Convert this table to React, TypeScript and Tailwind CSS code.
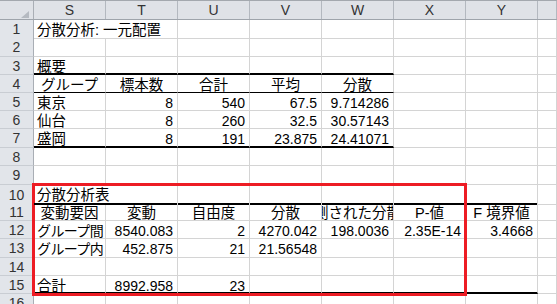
type Align = "l" | "r" | "c";
type Cell = [string, Align, ("spill" | "tight")?] | null;
type Row = { h: string; edge?: "thick" | "thin"; span?: number; cells: Cell[] };

const COLS = ["S", "T", "U", "V", "W", "X", "Y", ""];

// row heights follow the screenshot's gridlines (18/19px alternate)
const ROWS: Row[] = [
  { h: "h-[18px]", cells: [["分散分析: 一元配置", "l", "spill"]] },
  { h: "h-[19px]", cells: [] },
  { h: "h-[18px]", edge: "thick", span: 5, cells: [["概要", "l"]] },
  {
    h: "h-[18px]",
    edge: "thin",
    span: 5,
    cells: [["グループ", "c"], ["標本数", "c"], ["合計", "c"], ["平均", "c"], ["分散", "c"]],
  },
  { h: "h-[18px]", cells: [["東京", "l"], ["8", "r"], ["540", "r"], ["67.5", "r"], ["9.714286", "r"]] },
  { h: "h-[18px]", cells: [["仙台", "l"], ["8", "r"], ["260", "r"], ["32.5", "r"], ["30.57143", "r"]] },
  {
    h: "h-[19px]",
    edge: "thick",
    span: 5,
    cells: [["盛岡", "l"], ["8", "r"], ["191", "r"], ["23.875", "r"], ["24.41071", "r"]],
  },
  { h: "h-[18px]", cells: [] },
  { h: "h-[19px]", cells: [] },
  { h: "h-[18px]", edge: "thick", span: 7, cells: [["分散分析表", "l", "spill"]] },
  {
    h: "h-[18px]",
    cells: [
      ["変動要因", "c"],
      ["変動", "c"],
      ["自由度", "c"],
      ["分散", "c"],
      ["観測された分散比", "c"],
      ["P-値", "c"],
      ["F 境界値", "c"],
    ],
  },
  {
    h: "h-[18px]",
    cells: [
      ["グループ間", "l", "tight"],
      ["8540.083", "r"],
      ["2", "r"],
      ["4270.042", "r"],
      ["198.0036", "r"],
      ["2.35E-14", "r"],
      ["3.4668", "r"],
    ],
  },
  {
    h: "h-[19px]",
    cells: [["グループ内", "l", "tight"], ["452.875", "r"], ["21", "r"], ["21.56548", "r"]],
  },
  { h: "h-[18px]", cells: [] },
  { h: "h-[18px]", edge: "thick", span: 7, cells: [["合計", "l"], ["8992.958", "r"], ["23", "r"]] },
  { h: "h-[18px]", cells: [] },
];

const ALIGN: Record<Align, string> = {
  l: "justify-start pl-[3px]",
  r: "justify-end pr-[4px]",
  c: "justify-center",
};

function GridCell({ cell, edge }: { cell: Cell; edge?: "thick" | "thin" }) {
  const bottom =
    edge === "thick"
      ? "border-b-2 border-b-black"
      : edge === "thin"
        ? "border-b border-b-black"
        : "border-b border-b-[#d4d4d4]";
  // text spilling into an empty neighbour hides the gridline, like Excel
  const spill = cell?.[2] === "spill";
  const numeric = cell ? /^[\d.E-]+$/.test(cell[0]) : false;
  const size =
    cell?.[2] === "tight" ? "text-[14px] tracking-[-0.6px]" : numeric ? "text-[14px]" : "text-[14.5px]";
  return (
    <div
      className={`flex items-start whitespace-nowrap pt-[2px] leading-[16px] ${bottom} ${
        spill ? "relative z-10 overflow-visible" : "overflow-hidden border-r border-r-[#d4d4d4]"
      } ${cell ? ALIGN[cell[1]] : ""} ${size}`}
    >
      {cell && <span className="shrink-0">{cell[0]}</span>}
    </div>
  );
}

export default function App() {
  return (
    <div className="relative h-[304px] w-[557px] overflow-hidden bg-white font-['Liberation_Sans','Noto_Sans_CJK_JP',sans-serif] text-[14px] text-black">
      {/* column headers */}
      <div className="grid h-[20px] grid-cols-[34px_repeat(7,72px)_1fr] border-y border-t-[#a3a8ae] border-b-[#9ea4ab] bg-[#dfe2e7] text-[#333]">
        <div className="flex items-end justify-end border-r border-r-[#a9aeb5] pr-[4px] pb-[1px]">
          <svg width="8" height="7" viewBox="0 0 8 7">
            <polygon points="8,0 8,7 0,7" fill="#b5bac1" />
          </svg>
        </div>
        {COLS.map((c, i) => (
          <div key={i} className="flex items-center justify-center border-r border-r-[#b3b8bf] leading-[18px]">
            {c}
          </div>
        ))}
      </div>

      {ROWS.map((row, r) => (
        <div key={r} className={`grid grid-cols-[34px_repeat(7,72px)_1fr] ${row.h}`}>
          <div className="flex items-center justify-center border-r border-b border-r-[#a9aeb5] border-b-[#c9cdd3] bg-[#e2e5ea] leading-[16px] text-[#333]">
            {r + 1}
          </div>
          {COLS.map((_, c) => (
            <GridCell
              key={c}
              cell={row.cells[c] ?? null}
              edge={row.edge && c < (row.span ?? 0) ? row.edge : undefined}
            />
          ))}
        </div>
      ))}

      {/* red highlight drawn over the ANOVA table */}
      <div className="absolute left-[32px] top-[183px] h-[113px] w-[435px] border-[3px] border-[#ed1c24]" />
    </div>
  );
}
